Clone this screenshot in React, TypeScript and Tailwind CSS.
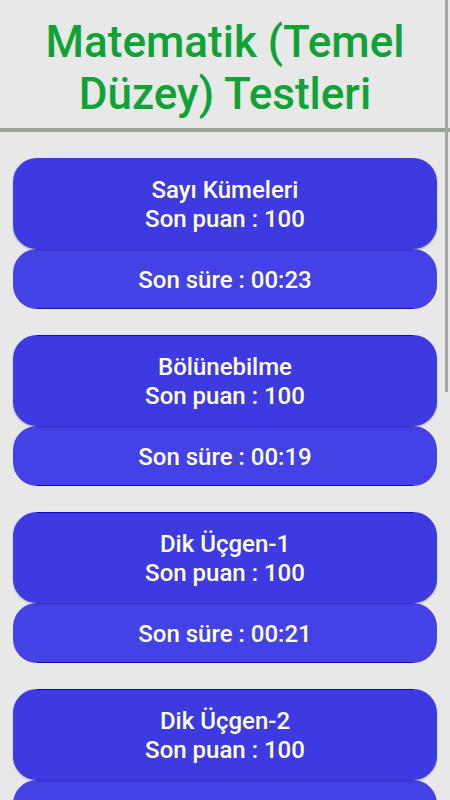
const tests = [
  { name: 'Sayı Kümeleri', score: 100, time: '00:23' },
  { name: 'Bölünebilme', score: 100, time: '00:19' },
  { name: 'Dik Üçgen-1', score: 100, time: '00:21' },
  { name: 'Dik Üçgen-2', score: 100, time: '00:18' },
];

export default function App() {
  return (
    <div className="relative h-[800px] w-[450px] overflow-hidden bg-[#e8e8e8] font-['Roboto',sans-serif]">
      {/* Header */}
      <div className="flex h-[128px] items-center justify-center pt-[8px]">
        <h1 className="text-center text-[44px] font-medium leading-[52px] text-[#0fa335]">
          Matematik (Temel
          <br />
          Düzey) Testleri
        </h1>
      </div>
      <div className="h-[4px] bg-[#99a299]" />

      {/* List */}
      <div className="flex flex-col gap-[26px] px-[13px] pt-[26px]">
        {tests.map((t, i) => (
          <div key={t.name} className="flex flex-col">
            <div
              className={`relative z-10 flex h-[91px] flex-col items-center justify-center rounded-3xl bg-[#3c3ae0] pt-[2px] text-[24px] font-medium leading-[29px] text-white shadow-[0_1px_2px_rgba(0,0,80,0.3)] ${
                i > 0 ? 'before:absolute before:left-6 before:right-6 before:top-0 before:h-px before:bg-[#0a0ac8]' : ''
              }`}
            >
              <span>{t.name}</span>
              <span>Son puan : {t.score}</span>
            </div>
            <div className="relative flex h-[60px] items-center justify-center rounded-3xl bg-[#4242e6] pt-[1px] text-[24px] font-medium text-white after:absolute after:bottom-0 after:left-6 after:right-6 after:h-px after:bg-[#0a0ac8]">
              Son süre : {t.time}
            </div>
          </div>
        ))}
      </div>

      {/* Scrollbar thumb */}
      <div className="absolute right-[2px] top-0 z-20 h-[392px] w-[3px] bg-[#a6a6a6]" />
    </div>
  );
}
